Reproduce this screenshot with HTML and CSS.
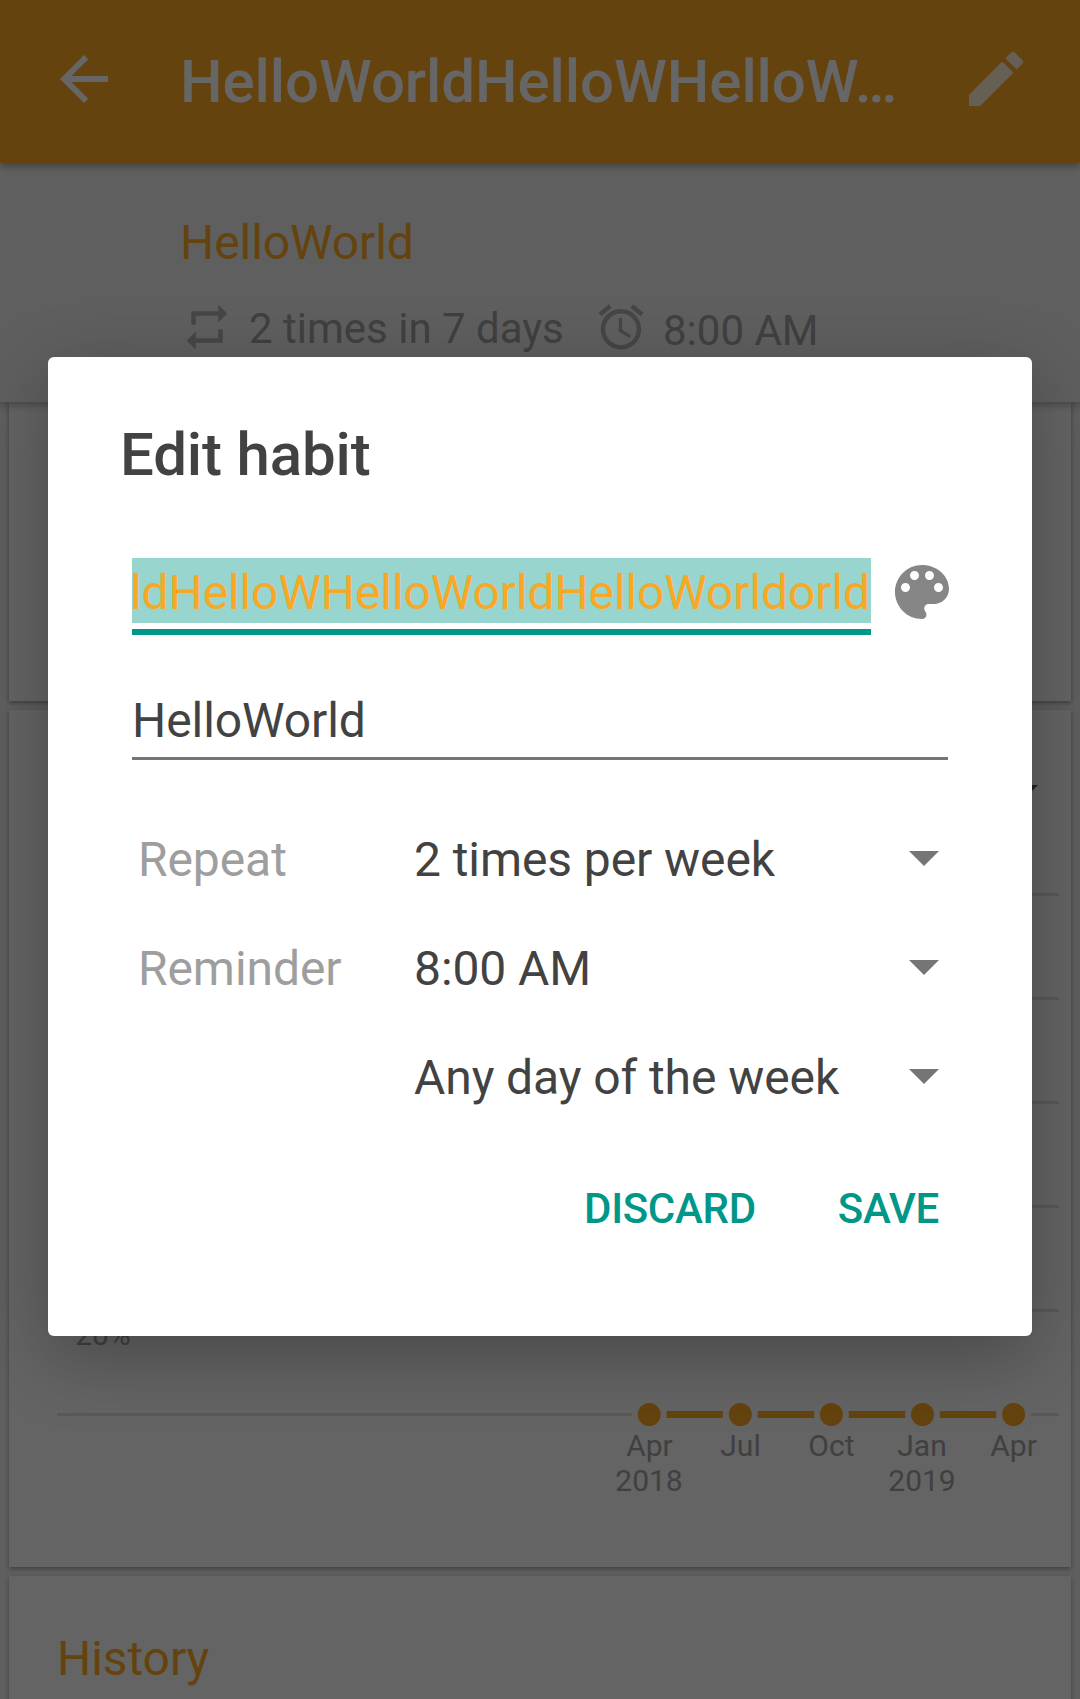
FILE: index.html
```html
<!DOCTYPE html>
<html lang="en">
<head>
<meta charset="utf-8">
<title>Edit habit</title>
<link rel="stylesheet" href="styles.css">
</head>
<body>
<div class="screen">
  <header class="appbar">
    <svg class="icon-72" viewBox="0 0 24 24"><path d="M20 11H7.83l5.59-5.59L12 4l-8 8 8 8 1.41-1.41L7.83 13H20v-2z"/></svg>
    <h1 class="appbar-title">HelloWorldHelloWHelloW…</h1>
    <svg class="icon-72 edit" viewBox="0 0 24 24"><path d="M3 17.25V21h3.75L17.81 9.94l-3.75-3.75L3 17.25zM20.71 7.04c.39-.39.39-1.02 0-1.41l-2.34-2.34c-.39-.39-1.02-.39-1.41 0l-1.83 1.83 3.75 3.75 1.83-1.83z"/></svg>
  </header>
  <section class="summary">
    <div class="question">HelloWorld</div>
    <div class="meta">
      <svg class="icon-54" viewBox="0 0 24 24"><path d="M7 7h10v3l4-4-4-4v3H5v6h2V7zm10 10H7v-3l-4 4 4 4v-3h12v-6h-2v4z"/></svg>
      <span class="frequency">2 times in 7 days</span>
      <svg class="icon-54" viewBox="0 0 24 24"><path d="M22 5.72l-4.6-3.86-1.29 1.53 4.6 3.86L22 5.72zM7.88 3.39L6.6 1.86 2 5.71l1.29 1.53 4.59-3.85zM12.5 8H11v6l4.75 2.85.75-1.23-4-2.37V8zM12 4c-4.97 0-9 4.03-9 9s4.02 9 9 9a9 9 0 1 0 0-18zm0 16c-3.87 0-7-3.13-7-7s3.13-7 7-7 7 3.13 7 7-3.13 7-7 7z"/></svg>
      <span class="time">8:00 AM</span>
    </div>
  </section>
  <main class="cards">
    <section class="card overview"></section>
    <section class="card score">
      <svg class="chart" viewBox="0 0 1062 857">
        <path class="spinner-arrow" d="M999 75h30l-15 15z"/>
        <path class="grid" d="M48 184.500h1002M48 288.500h1002M48 392.500h1002M48 496.500h1002M48 600.500h1002M48 704.500h1002"/>
        <path class="series" d="M640.500 704.500h364"/>
        <g class="points">
          <circle cx="640.200" cy="704.500" r="14.500"/>
          <circle cx="731.300" cy="704.500" r="14.500"/>
          <circle cx="822.400" cy="704.500" r="14.500"/>
          <circle cx="913.500" cy="704.500" r="14.500"/>
          <circle cx="1004.600" cy="704.500" r="14.500"/>
        </g>
        <g class="labels">
          <text x="94" y="635">20%</text>
          <text x="640.500" y="746">Apr</text>
          <text x="640" y="781">2018</text>
          <text x="731.500" y="746">Jul</text>
          <text x="822.400" y="746">Oct</text>
          <text x="913" y="746">Jan</text>
          <text x="913" y="781">2019</text>
          <text x="1004.600" y="746">Apr</text>
        </g>
      </svg>
    </section>
    <section class="card history"><h2 class="card-title">History</h2></section>
  </main>
  <div class="scrim">
    <div class="dialog">
      <h2 class="dialog-title">Edit habit</h2>
      <div class="name-row">
        <div class="name-field"><span class="selection">ldHelloWHelloWorldHelloWorldorld</span></div>
        <svg class="icon-72 palette" viewBox="0 0 24 24"><path d="M12 3c-4.970 0-9 4.030-9 9s4.030 9 9 9c.83 0 1.500-.67 1.500-1.500 0-.39-.15-.74-.39-1.010-.23-.26-.38-.61-.38-.99 0-.83.67-1.500 1.500-1.500H16c2.760 0 5-2.240 5-5 0-4.420-4.030-8-9-8zm-5.500 9c-.83 0-1.500-.67-1.500-1.500S5.670 9 6.500 9 8 9.670 8 10.500 7.330 12 6.500 12zm3-4C8.670 8 8 7.330 8 6.500S8.670 5 9.500 5s1.500.67 1.500 1.500S10.330 8 9.500 8zm5 0c-.83 0-1.500-.67-1.500-1.500S13.670 5 14.500 5s1.500.67 1.500 1.500S15.330 8 14.500 8zm3 4c-.83 0-1.500-.67-1.500-1.500S16.670 9 17.500 9s1.500.67 1.500 1.500-.67 1.500-1.500 1.500z"/></svg>
      </div>
      <div class="question-field">HelloWorld</div>
      <div class="options">
        <div class="option"><span class="option-label">Repeat</span><span class="option-value">2 times per week</span><svg class="arrow" viewBox="0 0 30 15"><path d="M0 0h30L15 15z"/></svg></div>
        <div class="option"><span class="option-label">Reminder</span><span class="option-value">8:00 AM</span><svg class="arrow" viewBox="0 0 30 15"><path d="M0 0h30L15 15z"/></svg></div>
        <div class="option"><span class="option-label"></span><span class="option-value">Any day of the week</span><svg class="arrow" viewBox="0 0 30 15"><path d="M0 0h30L15 15z"/></svg></div>
      </div>
      <div class="actions"><span>DISCARD</span><span>SAVE</span></div>
    </div>
  </div>
</div>
</body>
</html>
```
FILE: styles.css
```css
* { box-sizing: border-box; margin: 0; }
body { font-family: Roboto, sans-serif; font-size: 48px; line-height: 56px; font-weight: 400; letter-spacing: -0.08px; }
h1, h2 { font: inherit; }
svg { display: block; flex: none; }

.screen { position: relative; width: 1080px; height: 1699px; overflow: hidden; background: #eee; }

.icon-72 { width: 72px; height: 72px; }
.icon-54 { width: 54px; height: 54px; fill: #b0b0b0; }

.appbar { position: relative; z-index: 2; display: flex; align-items: center; height: 163px; padding: 0 48px 5px; background: #f9a825; color: #fff; fill: #fff; box-shadow: 0 3px 8px rgba(0, 0, 0, .35); }
.appbar-title { width: 732px; margin: 5px 48px 0 60px; white-space: nowrap; font-size: 60px; line-height: 72px; font-weight: 500; letter-spacing: -0.06px; }
.edit { opacity: .8; }

.summary { position: relative; z-index: 1; height: 239px; padding: 52px 0 0 180px; background: #eee; box-shadow: 0 3px 8px rgba(0, 0, 0, .3); }
.question { color: #f9a825; }
.meta { display: flex; align-items: flex-start; padding-top: 29px; font-size: 42px; line-height: 50px; letter-spacing: 0; color: #a0a0a0; }
.frequency { width: 345px; margin: 4px 0 0 15px; white-space: nowrap; }
.time { margin: 6px 0 0 15px; }

.cards { display: flex; flex-direction: column; gap: 9px; padding: 0 9px; }
.card { background: #fafafa; box-shadow: 0 2px 5px rgba(0, 0, 0, .35); }
.overview { height: 299px; }
.score { height: 857px; }
.history { height: 130px; padding: 55px 48px; }
.card-title { color: #f9a825; }

.chart { width: 1062px; height: 857px; }
.grid { stroke: #dedede; stroke-width: 3; }
.series { stroke: #f9a825; stroke-width: 7; }
.points { fill: #f9a825; stroke: #fafafa; stroke-width: 6; }
.labels { font-size: 30px; letter-spacing: 0; fill: #a0a0a0; text-anchor: middle; }
.spinner-arrow { fill: #555; }

.scrim { position: absolute; inset: 0; z-index: 3; display: flex; justify-content: center; align-items: flex-start; padding-top: 357px; background: rgba(0, 0, 0, .6); }
.dialog { width: 984px; height: 979px; padding: 62px 84px 0; border-radius: 6px; background: #fff; color: #424242; box-shadow: 0 20px 72px rgba(0, 0, 0, .28); }
.dialog-title { margin-left: -12px; font-size: 60px; line-height: 72px; font-weight: 500; letter-spacing: -0.15px; }
.name-row { display: flex; align-items: flex-start; gap: 15px; margin-top: 67px; }
.name-field { display: flex; flex: none; justify-content: flex-end; width: 739px; height: 77px; border-bottom: 6px solid #009688; }
.selection { width: 739px; height: 65px; padding-top: 7px; background: #99d5cf; color: #f9a825; line-height: 56px; letter-spacing: -0.11px; text-indent: -2px; white-space: nowrap; }
.palette { margin-top: -2px; fill: #868686; }
.question-field { height: 77px; margin-top: 48px; padding-top: 10px; border-bottom: 3px solid #757575; line-height: 56px; }
.options { padding-top: 69px; }
.option { display: grid; grid-template-columns: 276px 1fr 30px; align-items: center; height: 59px; margin-bottom: 50px; padding: 0 9px 0 6px; }
.option-label { padding-top: 3px; color: #9e9e9e; }
.option-value { padding-top: 3px; white-space: nowrap; }
.arrow { width: 30px; height: 15px; fill: #757575; }
.actions { display: flex; justify-content: flex-end; gap: 82px; padding: 28px 9px 0 0; color: #009688; font-size: 42px; line-height: 50px; font-weight: 500; letter-spacing: -0.3px; }
```
